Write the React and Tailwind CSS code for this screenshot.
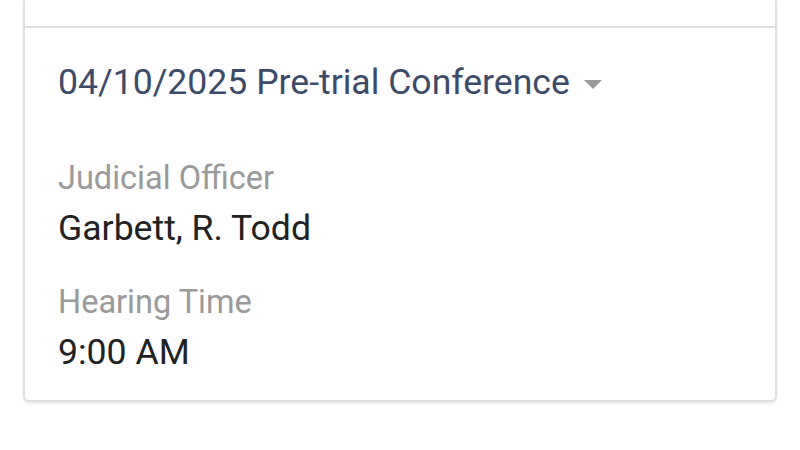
export default function App() {
  return (
    <div className="w-[800px] h-[450px] bg-white overflow-hidden" style={{ fontFamily: "Roboto, 'Liberation Sans', sans-serif" }}>
      <div className="mx-[23px] border-x-2 border-b-2 border-[#e0e0e0] rounded-b-[6px] shadow-[0_2px_3px_rgba(0,0,0,0.08)]">
        <div className="h-[28px] border-b-2 border-[#e0e0e0]"></div>
        <div className="pl-[33px] pr-6 pt-[34px] pb-[28px]">
          <div className="flex items-center gap-[14px]">
            <span className="text-[35.6px] leading-[40px] text-[#3d4b69]">04/10/2025 Pre-trial Conference</span>
            <span className="w-0 h-0 border-x-[9px] border-x-transparent border-t-[9px] border-t-[#9a9a9a] mt-[5px]"></span>
          </div>
          <div className="mt-[58px] flex flex-col">
            <span className="text-[32.5px] leading-[36px] text-[#9a9a9a]">Judicial Officer</span>
            <span className="text-[35.6px] leading-[40px] text-[#222] mt-[12px]">Garbett, R. Todd</span>
            <span className="text-[32.5px] leading-[36px] text-[#9a9a9a] mt-[36px]">Hearing Time</span>
            <span className="text-[35.6px] leading-[40px] text-[#222] mt-[12px]">9:00 AM</span>
          </div>
        </div>
      </div>
    </div>
  );
}
